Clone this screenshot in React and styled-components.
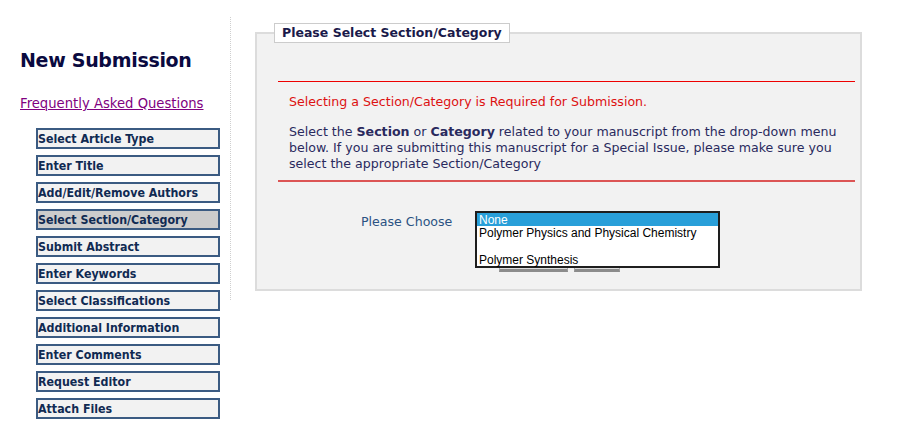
import React from 'react';
import styled, { createGlobalStyle } from 'styled-components';

const GlobalStyle = createGlobalStyle`
  body {
    margin: 0;
    background: #ffffff;
    font-family: "DejaVu Sans", Verdana, sans-serif;
  }
`;

const Page = styled.div`
  display: flex;
  align-items: flex-start;
  width: 900px;
  height: 440px;
  overflow: hidden;
`;

const Sidebar = styled.aside`
  width: 230px;
  flex-shrink: 0;
  padding-top: 48px;
`;

const Heading = styled.h1`
  margin: 0 0 0 20px;
  font-size: 19px;
  letter-spacing: -0.3px;
  line-height: 24px;
  font-weight: bold;
  color: #0a0a40;
`;

const FaqLink = styled.a`
  display: inline-block;
  margin: 23px 0 0 20px;
  font-size: 13.2px;
  line-height: 17px;
  color: #800080;
  text-decoration: underline;
`;

const NavList = styled.ul`
  list-style: none;
  margin: 16px 0 0 36px;
  padding: 0;
  display: flex;
  flex-direction: column;
  gap: 6px;
`;

const NavItem = styled.li`
  box-sizing: border-box;
  width: 184px;
  height: 21px;
  border: 2px solid #3b5b82;
  background: ${p => (p.$active ? '#cccccc' : '#f2f2f2')};
  padding: 1px 0 0 0;
  font-family: "DejaVu Sans Condensed", "DejaVu Sans", sans-serif;
  font-size: 12.3px;
  font-weight: bold;
  line-height: 16px;
  color: #102a52;
  white-space: nowrap;
`;

const Divider = styled.div`
  width: 0;
  height: 283px;
  margin-top: 17px;
  border-left: 1px dotted #cfcfcf;
`;

const Main = styled.main`
  padding: 23px 0 0 24px;
`;

const Panel = styled.fieldset`
  box-sizing: border-box;
  width: 607px;
  margin: 0;
  padding: 0 0 17px 0;
  border: 2px solid #dcdcdc;
  background: #f2f2f2;
`;

const Legend = styled.legend`
  margin-left: 17px;
  padding: 0 7px;
  border: 1px solid #cccccc;
  background: #ffffff;
  font-size: 12.5px;
  font-weight: bold;
  line-height: 18px;
  color: #1a1a4a;
`;

const Body = styled.div`
  padding: 38px 5px 0 21px;
`;

const Rule = styled.div`
  margin-top: ${p => p.$gap || 0}px;
  height: ${p => (p.$thick ? 2 : 1)}px;
  background: ${p => (p.$thick ? '#dc5555' : '#ee0000')};
`;

const Text = styled.p`
  margin: ${p => p.$gap}px 0 0 11px;
  font-size: 12.6px;
  line-height: 16px;
  color: ${p => (p.$error ? '#dd1111' : '#2a2a5e')};
`;

const ChooseRow = styled.div`
  display: flex;
  align-items: flex-start;
  margin-top: 29px;
  padding-left: 83px;
`;

const Label = styled.span`
  width: 114px;
  padding-top: 3px;
  font-size: 12.6px;
  line-height: 16px;
  color: #2b5283;
`;

const Field = styled.div`
  position: relative;
  width: 245px;
  padding-top: 37px;
`;

const ButtonRow = styled.div`
  display: flex;
  gap: 6px;
  margin-left: 24px;
`;

const Button = styled.button`
  box-sizing: border-box;
  width: ${p => p.$w}px;
  height: 24px;
  padding: 0;
  border: 1px solid #aaaaaa;
  border-bottom: 3px solid #8c8c8c;
  background: #dddddd;
`;

const ListBox = styled.ul`
  position: absolute;
  top: 0;
  left: 0;
  z-index: 2;
  box-sizing: border-box;
  width: 245px;
  height: 57px;
  margin: 0;
  padding: 0;
  list-style: none;
  border: 2px solid #1e1e1e;
  background: #ffffff;
  font-family: "Liberation Sans", Arial, sans-serif;
  font-size: 12px;
`;

const Option = styled.li`
  height: 13.25px;
  line-height: 14px;
  padding-left: 2px;
  white-space: nowrap;
  background: ${p => (p.$selected ? '#299fd9' : 'transparent')};
  color: ${p => (p.$selected ? '#ffffff' : '#000000')};
`;

const steps = [
  'Select Article Type',
  'Enter Title',
  'Add/Edit/Remove Authors',
  'Select Section/Category',
  'Submit Abstract',
  'Enter Keywords',
  'Select Classifications',
  'Additional Information',
  'Enter Comments',
  'Request Editor',
  'Attach Files',
];

const options = ['None', 'Polymer Physics and Physical Chemistry', '\u00a0', 'Polymer Synthesis'];

export default function App() {
  return (
    <Page>
      <GlobalStyle />
      <Sidebar>
        <Heading>New Submission</Heading>
        <FaqLink href="#">Frequently Asked Questions</FaqLink>
        <NavList>
          {steps.map(s => (
            <NavItem key={s} $active={s === 'Select Section/Category'}>{s}</NavItem>
          ))}
        </NavList>
      </Sidebar>
      <Divider />
      <Main>
        <Panel>
          <Legend>Please Select Section/Category</Legend>
          <Body>
            <Rule />
            <Text $error $gap={12}>Selecting a Section/Category is Required for Submission.</Text>
            <Text $gap={14}>
              Select the <b>Section</b> or <b>Category</b> related to your manuscript from the drop-down menu
              below. If you are submitting this manuscript for a Special Issue, please make sure you
              select the appropriate Section/Category
            </Text>
            <Rule $thick $gap={8} />
            <ChooseRow>
              <Label>Please Choose</Label>
              <Field>
                <ListBox>
                  {options.map((o, i) => (
                    <Option key={i} $selected={i === 0}>{o}</Option>
                  ))}
                </ListBox>
                <ButtonRow>
                  <Button $w={69} />
                  <Button $w={46} />
                </ButtonRow>
              </Field>
            </ChooseRow>
          </Body>
        </Panel>
      </Main>
    </Page>
  );
}
